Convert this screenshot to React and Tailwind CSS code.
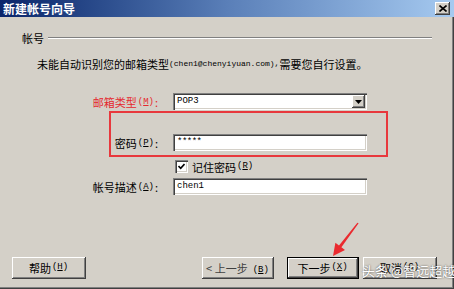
import React from "react";

const cjk = { fontFamily: '"Noto Sans CJK SC", "Liberation Sans", sans-serif' };
const mono = { fontFamily: '"Liberation Mono", "Noto Sans CJK SC", monospace' };

const raised =
  "bg-[#d4d0c8] shadow-[inset_-1px_-1px_#404040,inset_1px_1px_#ffffff,inset_-2px_-2px_#808080,inset_2px_2px_#d4d0c8]";
const sunken =
  "bg-white shadow-[inset_1px_1px_#808080,inset_2px_2px_#404040,inset_-1px_-1px_#ffffff,inset_-2px_-2px_#d4d0c8]";

function Key({ k }) {
  return (
    <span className="text-[9px] mx-[1px]" style={mono}>
      (<span className="underline">{k}</span>)
    </span>
  );
}

function Label({ children, k, red }) {
  return (
    <div
      className={`w-[158px] flex justify-end items-center text-[11px] leading-[14px] ${red ? "text-[#e5282e]" : "text-black"}`}
      style={cjk}
    >
      <span>{children}</span>
      <Key k={k} />
      <span>:</span>
    </div>
  );
}

function Btn({ children, w, def }) {
  const inner = (
    <div
      className={`${raised} h-full flex items-center justify-center text-[11px] text-black`}
      style={cjk}
    >
      {children}
    </div>
  );
  return (
    <div className={`${w} h-[22px] ${def ? "border border-black" : ""}`}>
      {inner}
    </div>
  );
}

export default function App() {
  return (
    <div className="relative w-[454px] h-[289px] overflow-hidden bg-[#d4d0c8] flex flex-col shadow-[inset_-1px_-1px_#404040,inset_-2px_-2px_#808080]">
      {/* title bar */}
      <div className="h-[17px] flex items-center justify-between pl-[3px] pr-[4px] bg-gradient-to-r from-[#0a246a] via-[#5a7fb8] to-[#a6caf0]">
        <span className="text-white font-bold text-[12px] leading-[14px]" style={cjk}>
          新建帐号向导
        </span>
        <div className={`${raised} w-[15px] h-[13px] flex items-center justify-center`}>
          <svg width="8" height="7" viewBox="0 0 8 7">
            <path d="M0.5 0.5 L7.5 6.5 M7.5 0.5 L0.5 6.5" stroke="#000" strokeWidth="1.6" />
          </svg>
        </div>
      </div>

      {/* section header */}
      <div className="mt-[14px] h-[14px] flex items-center pl-[22px] pr-[22px]">
        <span className="text-[11px] leading-[14px] text-black" style={cjk}>
          帐号
        </span>
        <div className="flex-1 ml-[4px] h-[2px] border-t border-[#808080] border-b border-b-white" />
      </div>

      {/* instruction */}
      <div className="mt-[12px] h-[14px] pl-[37px] flex items-center text-[11px] leading-[14px] text-black whitespace-nowrap" style={cjk}>
        <span>未能自动识别您的邮箱类型</span>
        <span className="text-[8px]" style={mono}>(chen1@chenyiyuan.com),</span>
        <span>需要您自行设置。</span>
      </div>

      {/* mail type */}
      <div className="mt-[22px] h-[17px] flex">
        <Label k="M" red>邮箱类型</Label>
        <div className={`${sunken} ml-[15px] w-[194px] h-[17px] flex items-center justify-between pl-[4px] pr-[2px]`}>
          <span className="text-[9px] text-black" style={mono}>POP3</span>
          <div className={`${raised} w-[13px] h-[13px] flex items-center justify-center`}>
            <svg width="7" height="4" viewBox="0 0 7 4">
              <path d="M0 0 H7 L3.5 4 Z" fill="#000" />
            </svg>
          </div>
        </div>
      </div>

      {/* password */}
      <div className="mt-[24px] h-[17px] flex">
        <Label k="P">密码</Label>
        <div className={`${sunken} ml-[15px] w-[194px] h-[17px] flex items-center pl-[4px]`}>
          <span className="text-[9px] text-black tracking-[-0.5px]" style={mono}>*****</span>
        </div>
      </div>

      {/* remember */}
      <div className="mt-[9px] h-[13px] flex items-center pl-[175px]">
        <div className={`${sunken} w-[13px] h-[13px] flex items-center justify-center`}>
          <svg width="7" height="7" viewBox="0 0 7 7">
            <path d="M0.5 3 L2.7 5.3 L6.5 1" stroke="#000" strokeWidth="1.6" fill="none" />
          </svg>
        </div>
        <span className="ml-[4px] text-[11px] leading-[14px] text-black" style={cjk}>记住密码</span>
        <Key k="R" />
      </div>

      {/* description */}
      <div className="mt-[5px] h-[17px] flex">
        <Label k="A">帐号描述</Label>
        <div className={`${sunken} ml-[15px] w-[194px] h-[17px] flex items-center pl-[4px]`}>
          <span className="text-[9px] text-black" style={mono}>chen1</span>
        </div>
      </div>

      {/* buttons */}
      <div className="mt-[62px] h-[22px] flex pl-[12px]">
        <Btn w="w-[74px]">
          帮助<Key k="H" />
        </Btn>
        <div className="ml-[116px]">
          <Btn w="w-[72px]">
            <span className="text-[#404040]">&lt; 上一步</span>
            <span className="ml-[4px]"><Key k="B" /></span>
          </Btn>
        </div>
        <div className="ml-[13px]">
          <Btn w="w-[72px]" def>
            下一步<Key k="X" />
          </Btn>
        </div>
        <div className="ml-[4px]">
          <Btn w="w-[74px]">
            取消<Key k="C" />
          </Btn>
        </div>
      </div>

      {/* annotation: red box */}
      <div className="absolute left-[109px] top-[111px] w-[279px] h-[46px] border-2 border-[#e8383d]" />

      {/* annotation: red arrow */}
      <svg className="absolute left-0 top-0 pointer-events-none" width="454" height="289" viewBox="0 0 454 289">
        <polygon
          points="333,256 345,250 341.4,247.3 358.6,223.3 357.4,222.7 339,245.5 335.4,242.8"
          fill="#ea2a2f"
        />
      </svg>

      {/* watermark */}
      <div
        className="absolute left-[362px] top-[263px] text-[13px] leading-[16px] text-white whitespace-nowrap [text-shadow:0_0_2px_rgba(0,0,0,0.7)]"
        style={cjk}
      >
        头条 @智远超越
      </div>
    </div>
  );
}
